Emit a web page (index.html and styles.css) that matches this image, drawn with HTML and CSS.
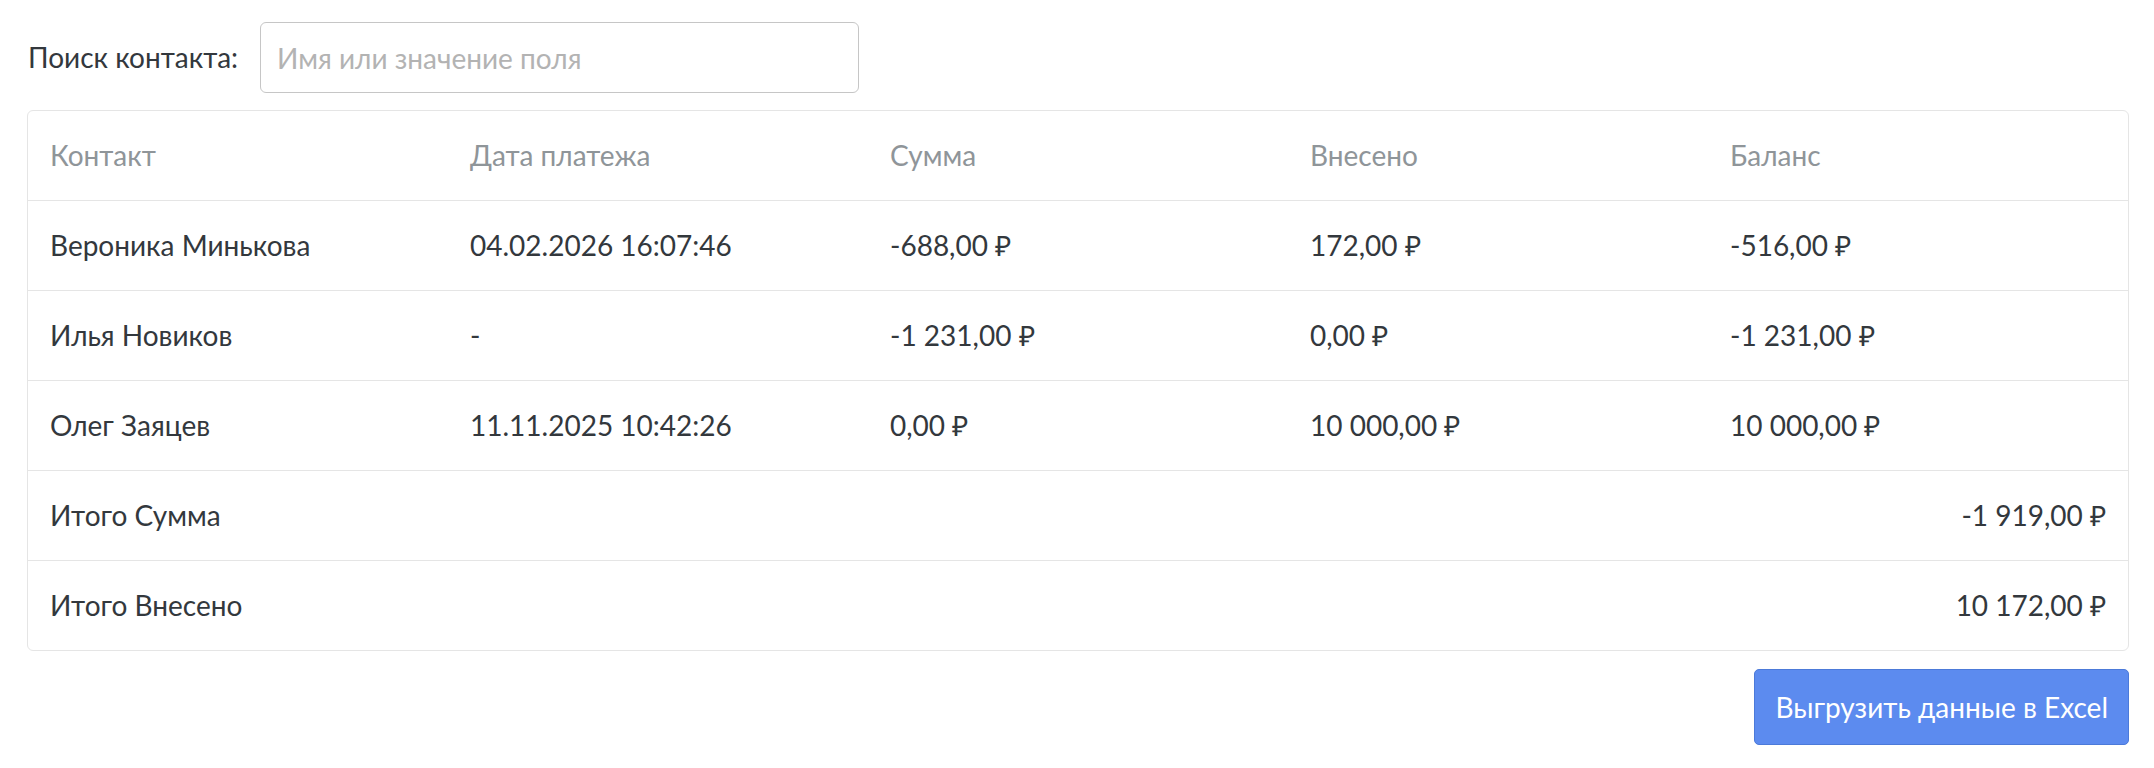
FILE: index.html
```html
<!DOCTYPE html>
<html lang="ru">
<head>
<meta charset="utf-8">
<title>Платежи</title>
<link rel="stylesheet" href="styles.css">
</head>
<body>
<div class="page">
  <div class="search">
    <label class="search-label" for="q">Поиск контакта:</label>
    <input class="search-input" id="q" type="text" placeholder="Имя или значение поля">
  </div>
  <div class="card">
    <table class="grid">
      <thead>
        <tr>
          <th>Контакт</th>
          <th>Дата платежа</th>
          <th>Сумма</th>
          <th>Внесено</th>
          <th>Баланс</th>
        </tr>
      </thead>
      <tbody>
        <tr>
          <td>Вероника Минькова</td>
          <td>04.02.2026 16:07:46</td>
          <td>-688,00 ₽</td>
          <td>172,00 ₽</td>
          <td>-516,00 ₽</td>
        </tr>
        <tr>
          <td>Илья Новиков</td>
          <td>-</td>
          <td>-1 231,00 ₽</td>
          <td>0,00 ₽</td>
          <td>-1 231,00 ₽</td>
        </tr>
        <tr>
          <td>Олег Заяцев</td>
          <td>11.11.2025 10:42:26</td>
          <td>0,00 ₽</td>
          <td>10 000,00 ₽</td>
          <td>10 000,00 ₽</td>
        </tr>
        <tr>
          <td>Итого Сумма</td>
          <td class="total" colspan="4">-1 919,00 ₽</td>
        </tr>
        <tr>
          <td>Итого Внесено</td>
          <td class="total" colspan="4">10 172,00 ₽</td>
        </tr>
      </tbody>
    </table>
  </div>
  <div class="actions">
    <button class="btn-export" type="button">Выгрузить данные в Excel</button>
  </div>
</div>
</body>
</html>
```

FILE: styles.css
```css
* { box-sizing: border-box; }

html, body {
  margin: 0;
  padding: 0;
  background: #ffffff;
}

body {
  font-family: Lato, "Open Sans", "Liberation Sans", sans-serif;
  font-size: 28px;
  line-height: 45px;
  color: #33383d;
}

.page {
  padding: 22px 25px 0 27px;
}

.search {
  display: flex;
  align-items: center;
  gap: 22px;
  padding-left: 1px;
}

.search-label {
  white-space: nowrap;
}

.search-input {
  width: 599px;
  height: 71px;
  border: 1px solid #c6c6c6;
  border-radius: 6px;
  padding: 0 16px;
  font: inherit;
  color: #33383d;
  outline: none;
}

.search-input::placeholder {
  color: #b3b3b3;
}

.card {
  margin-top: 17px;
  border: 1px solid #e5e5e5;
  border-radius: 6px;
  overflow: hidden;
}

.grid {
  width: 100%;
  border-collapse: collapse;
  table-layout: fixed;
}

.grid th,
.grid td {
  padding: 22px;
  text-align: left;
  vertical-align: middle;
  white-space: nowrap;
}

.grid th {
  font-weight: 400;
  color: #8f9599;
}

.grid tbody td {
  border-top: 1px solid #e5e5e5;
}

.grid td.total {
  text-align: right;
}

.actions {
  display: flex;
  justify-content: flex-end;
  margin-top: 18px;
}

.btn-export {
  font: inherit;
  color: #ffffff;
  background: #5c8bef;
  border: 1px solid #4c7ad9;
  border-radius: 5px;
  height: 76px;
  padding: 0 20px;
  cursor: pointer;
}
```
